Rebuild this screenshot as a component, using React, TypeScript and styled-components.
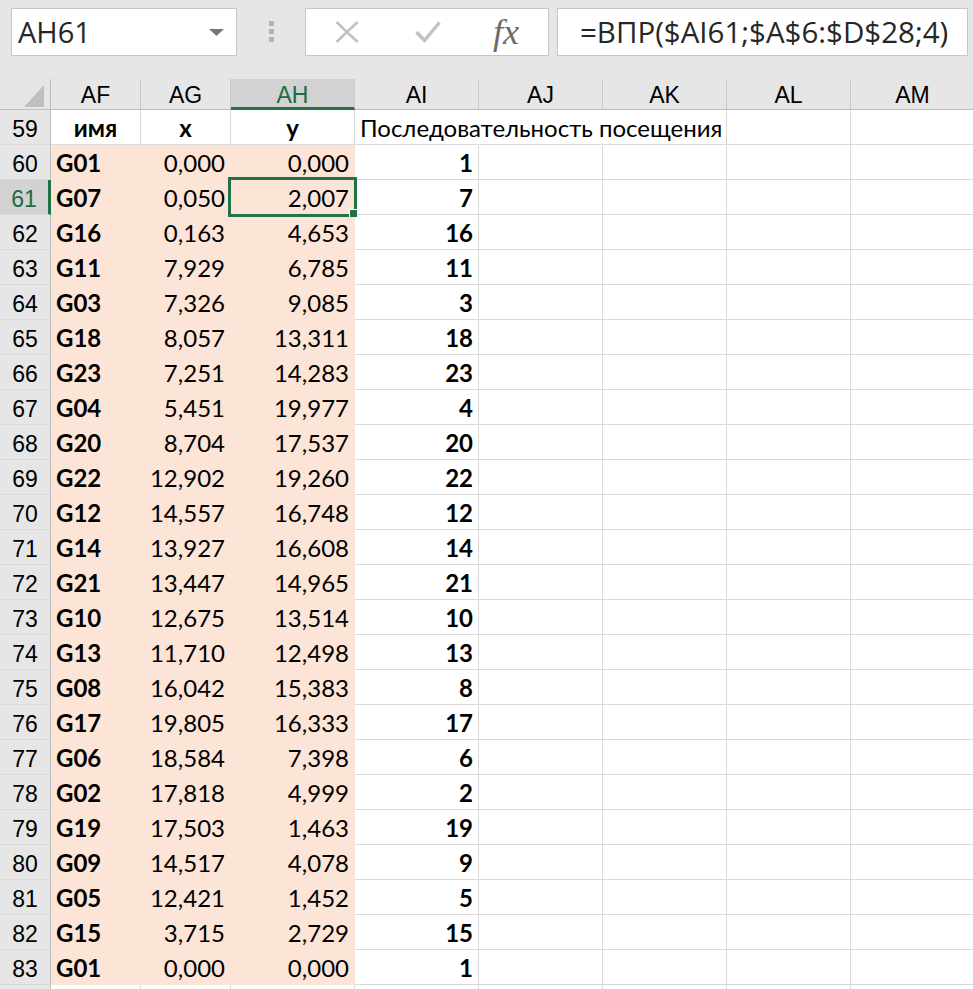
import React from "react";
import styled, { createGlobalStyle } from "styled-components";

const GlobalStyle = createGlobalStyle`
  html, body {
    margin: 0;
    padding: 0;
    background: #ffffff;
    overflow: hidden;
  }
  body {
    width: 973px;
    height: 989px;
  }
`;

const COLUMNS = ["AF", "AG", "AH", "AI", "AJ", "AK", "AL", "AM"];
const TEMPLATE = "51px 90px 90px 124px 124px 124px 124px 124px 124px";

const DATA: [string, string, string, string][] = [
  ["G01", "0,000", "0,000", "1"],
  ["G07", "0,050", "2,007", "7"],
  ["G16", "0,163", "4,653", "16"],
  ["G11", "7,929", "6,785", "11"],
  ["G03", "7,326", "9,085", "3"],
  ["G18", "8,057", "13,311", "18"],
  ["G23", "7,251", "14,283", "23"],
  ["G04", "5,451", "19,977", "4"],
  ["G20", "8,704", "17,537", "20"],
  ["G22", "12,902", "19,260", "22"],
  ["G12", "14,557", "16,748", "12"],
  ["G14", "13,927", "16,608", "14"],
  ["G21", "13,447", "14,965", "21"],
  ["G10", "12,675", "13,514", "10"],
  ["G13", "11,710", "12,498", "13"],
  ["G08", "16,042", "15,383", "8"],
  ["G17", "19,805", "16,333", "17"],
  ["G06", "18,584", "7,398", "6"],
  ["G02", "17,818", "4,999", "2"],
  ["G19", "17,503", "1,463", "19"],
  ["G09", "14,517", "4,078", "9"],
  ["G05", "12,421", "1,452", "5"],
  ["G15", "3,715", "2,729", "15"],
  ["G01", "0,000", "0,000", "1"],
];

const Page = styled.div`
  display: flex;
  flex-direction: column;
  width: 973px;
  height: 989px;
  overflow: hidden;
`;

const Toolbar = styled.div`
  display: flex;
  align-items: flex-start;
  height: 79px;
  flex-shrink: 0;
  padding: 8px 0 0 11px;
  box-sizing: border-box;
  background: #e6e6e6;
`;

const NameBox = styled.div`
  display: flex;
  align-items: center;
  justify-content: space-between;
  width: 226px;
  height: 48px;
  padding: 0 12px 0 6px;
  box-sizing: border-box;
  background: #ffffff;
  border: 1px solid #c6c6c6;
  font-family: "Open Sans", "Noto Sans", sans-serif;
  font-size: 29px;
  line-height: 46px;
  color: #262626;
`;

const Grip = styled.div`
  display: flex;
  flex-direction: column;
  gap: 3px;
  margin: 13px 0 0 32px;
`;

const GripDot = styled.span`
  width: 5px;
  height: 5px;
  background: #b4b4b4;
`;

const FormulaButtons = styled.div`
  display: flex;
  align-items: center;
  width: 244px;
  height: 48px;
  margin-left: 31px;
  box-sizing: border-box;
  background: #ffffff;
  border: 1px solid #c6c6c6;
`;

const IconSlot = styled.span<{ $gap: number }>`
  display: flex;
  margin-left: ${(p) => p.$gap}px;
`;

const Fx = styled.span`
  margin-left: 52px;
  font-family: "Liberation Serif", serif;
  font-style: italic;
  font-size: 36px;
  line-height: 44px;
  color: #6b6b6b;
`;

const FormulaInput = styled.div`
  width: 411px;
  height: 48px;
  margin-left: 8px;
  padding-left: 22px;
  box-sizing: border-box;
  background: #ffffff;
  border: 1px solid #c6c6c6;
  font-family: "Open Sans", "Noto Sans", sans-serif;
  font-size: 29.5px;
  line-height: 46px;
  color: #262626;
  white-space: nowrap;
  overflow: hidden;
`;

const Sheet = styled.div`
  display: flex;
  flex-direction: column;
`;

const Row = styled.div<{ $height: number }>`
  display: grid;
  grid-template-columns: ${TEMPLATE};
  height: ${(p) => p.$height}px;
  flex-shrink: 0;
`;

const ColHead = styled.div<{ $active?: boolean }>`
  box-sizing: border-box;
  padding-top: 1px;
  overflow: hidden;
  text-align: center;
  font-family: "Liberation Sans", Arial, sans-serif;
  font-size: 23px;
  line-height: 30px;
  color: ${(p) => (p.$active ? "#1e6b41" : "#000000")};
  background: ${(p) => (p.$active ? "#d2d2d2" : "#e6e6e6")};
  border-right: 1px solid #c8c8c8;
  border-bottom: ${(p) => (p.$active ? "3px solid #217346" : "1px solid #bdbdbd")};
`;

const Corner = styled.div`
  display: flex;
  align-items: flex-end;
  justify-content: flex-end;
  padding: 0 6px 2px 0;
  box-sizing: border-box;
  background: #e6e6e6;
  border-right: 1px solid #bdbdbd;
  border-bottom: 1px solid #bdbdbd;
`;

const RowHead = styled.div<{ $active?: boolean }>`
  box-sizing: border-box;
  padding-top: 4px;
  overflow: hidden;
  text-align: center;
  font-family: "Liberation Sans", Arial, sans-serif;
  font-size: 23px;
  line-height: 30px;
  color: ${(p) => (p.$active ? "#1e6b41" : "#000000")};
  background: ${(p) => (p.$active ? "#d2d2d2" : "#e6e6e6")};
  border-right: ${(p) => (p.$active ? "3px solid #217346" : "1px solid #bdbdbd")};
  border-bottom: 1px solid #d8d8d8;
`;

type Align = "left" | "right" | "center";

const Cell = styled.div<{
  $align: Align;
  $bold?: boolean;
  $fill?: boolean;
  $spill?: boolean;
}>`
  position: relative;
  box-sizing: border-box;
  padding: 3px 5px 0;
  font-family: Lato, "Open Sans", sans-serif;
  font-size: 24px;
  line-height: 30px;
  font-weight: ${(p) => (p.$bold ? 700 : 400)};
  text-align: ${(p) => p.$align};
  white-space: nowrap;
  color: #000000;
  background: ${(p) => (p.$fill ? "#fce4d6" : "transparent")};
  border-right: 1px solid
    ${(p) => (p.$fill ? "#fce4d6" : p.$spill ? "transparent" : "#dadada")};
  border-bottom: 1px solid ${(p) => (p.$fill ? "#fce4d6" : "#dadada")};
`;

const Selection = styled.div`
  position: absolute;
  inset: -3px;
  border: 3px solid #217346;
  z-index: 2;
  pointer-events: none;
`;

const FillHandle = styled.div`
  position: absolute;
  right: -3px;
  bottom: -3px;
  width: 7px;
  height: 7px;
  background: #217346;
  border-left: 1px solid #ffffff;
  border-top: 1px solid #ffffff;
  z-index: 3;
`;

function Toolbars() {
  return (
    <Toolbar>
      <NameBox>
        <span>AH61</span>
        <svg width="15" height="7" viewBox="0 0 15 7">
          <path d="M0 0 H15 L7.5 7 Z" fill="#767676" />
        </svg>
      </NameBox>
      <Grip>
        <GripDot />
        <GripDot />
        <GripDot />
      </Grip>
      <FormulaButtons>
        <IconSlot $gap={29}>
          <svg width="24" height="22" viewBox="0 0 24 22">
            <path d="M1.5 1 L22.5 21 M22.5 1 L1.5 21" stroke="#c2c2c2" strokeWidth="2.6" fill="none" />
          </svg>
        </IconSlot>
        <IconSlot $gap={56}>
          <svg width="26" height="22" viewBox="0 0 26 22">
            <path d="M1.5 11 L9.5 19.5 L24.5 1.5" stroke="#c2c2c2" strokeWidth="3.4" fill="none" />
          </svg>
        </IconSlot>
        <Fx>fx</Fx>
      </FormulaButtons>
      <FormulaInput>=ВПР($AI61;$A$6:$D$28;4)</FormulaInput>
    </Toolbar>
  );
}

export default function App() {
  return (
    <Page>
      <GlobalStyle />
      <Toolbars />
      <Sheet>
        <Row $height={31}>
          <Corner>
            <svg width="20" height="22" viewBox="0 0 20 22">
              <path d="M20 0 V22 H0 Z" fill="#bfbfbf" />
            </svg>
          </Corner>
          {COLUMNS.map((c) => (
            <ColHead key={c} $active={c === "AH"}>
              {c}
            </ColHead>
          ))}
        </Row>

        <Row $height={35}>
          <RowHead>59</RowHead>
          <Cell $align="center" $bold>имя</Cell>
          <Cell $align="center" $bold>x</Cell>
          <Cell $align="center" $bold>y</Cell>
          <Cell $align="left" $spill>Последовательность посещения</Cell>
          <Cell $align="left" $spill />
          <Cell $align="left" />
          <Cell $align="left" />
          <Cell $align="left" />
        </Row>

        {DATA.map(([name, x, y, order], i) => {
          const rowNo = 60 + i;
          const active = rowNo === 61;
          return (
            <Row key={rowNo} $height={35}>
              <RowHead $active={active}>{rowNo}</RowHead>
              <Cell $align="left" $bold $fill>{name}</Cell>
              <Cell $align="right" $fill>{x}</Cell>
              <Cell $align="right" $fill>
                {y}
                {active && (
                  <>
                    <Selection />
                    <FillHandle />
                  </>
                )}
              </Cell>
              <Cell $align="right" $bold>{order}</Cell>
              <Cell $align="left" />
              <Cell $align="left" />
              <Cell $align="left" />
              <Cell $align="left" />
            </Row>
          );
        })}

        <Row $height={35}>
          <RowHead />
          {COLUMNS.map((c) => (
            <Cell key={c} $align="left" />
          ))}
        </Row>
      </Sheet>
    </Page>
  );
}
